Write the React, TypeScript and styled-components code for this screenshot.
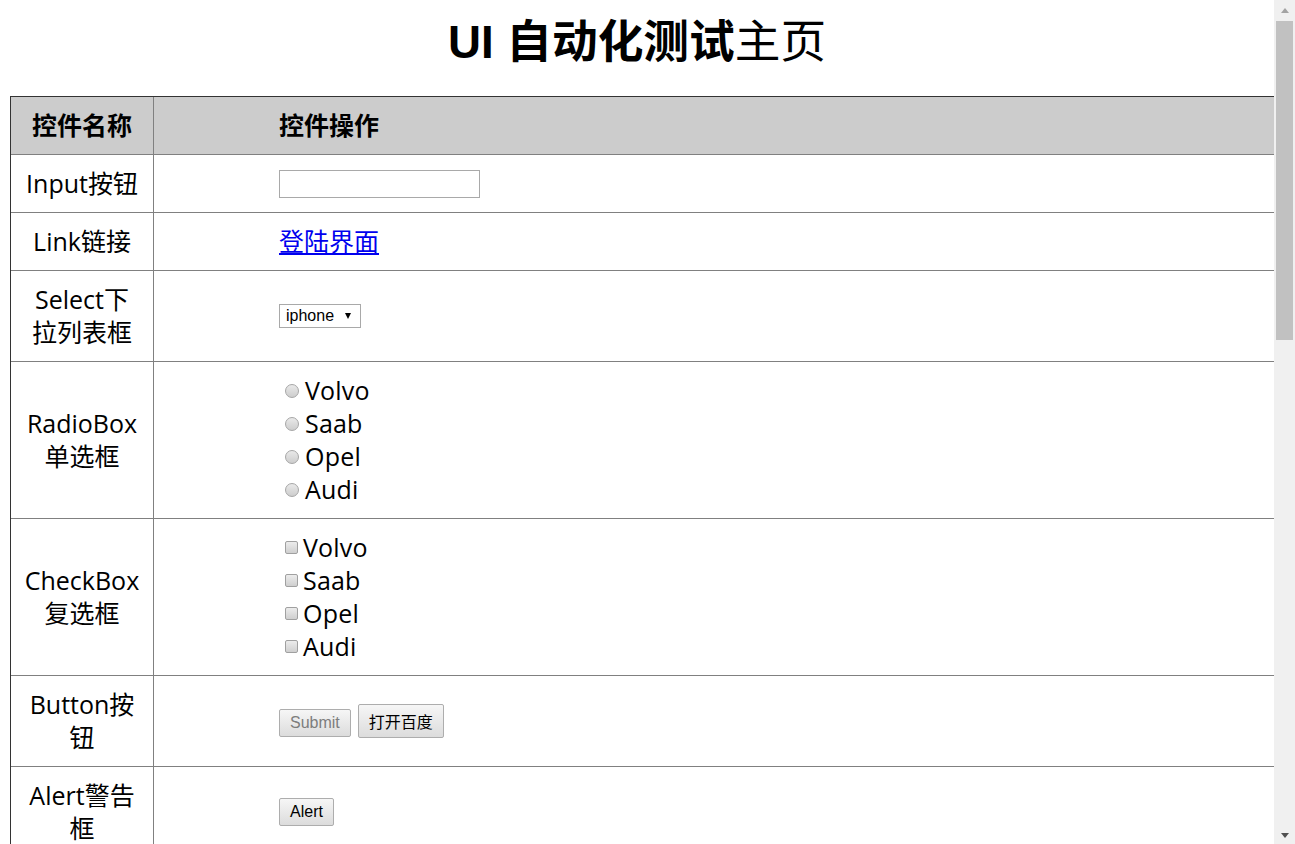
import React from 'react';
import styled, { createGlobalStyle } from 'styled-components';

const GlobalStyle = createGlobalStyle`
  html, body {
    margin: 0;
    padding: 0;
    height: 100%;
    overflow: hidden;
    background: #ffffff;
  }
  body {
    font-family: "Open Sans", "Noto Sans CJK SC", sans-serif;
    color: #000;
  }
`;

const Shell = styled.div`
  display: flex;
  height: 100vh;
  width: 100vw;
  overflow: hidden;
`;

const Page = styled.div`
  flex: 1;
  min-width: 0;
  overflow: hidden;
`;

const Title = styled.h1`
  margin: 17px 0 27px;
  text-align: center;
  font-family: "Liberation Sans", "Noto Sans CJK SC", sans-serif;
  font-size: 45.7px;
  line-height: 52px;
  font-weight: 400;
  white-space: nowrap;
`;

const Strong = styled.strong`
  font-weight: 700;
`;

const TableWrap = styled.div`
  padding-left: 10px;
`;

const Table = styled.table`
  width: 100%;
  box-sizing: border-box;
  table-layout: fixed;
  border-collapse: separate;
  border-spacing: 0;
  border-top: 1px solid #333333;
  border-left: 1px solid #333333;
  font-size: 25px;
  line-height: 33px;
`;

const NameCol = styled.col`
  width: 143px;
`;

const HeadCell = styled.th<{ $first?: boolean }>`
  box-sizing: border-box;
  background: #cccccc;
  font-weight: 700;
  padding: ${(p) => (p.$first ? '12px 4px' : '12px 0 12px 125px')};
  text-align: ${(p) => (p.$first ? 'center' : 'left')};
  border-bottom: 1px solid #808080;
  border-right: ${(p) => (p.$first ? '1px solid #808080' : 'none')};
  white-space: nowrap;
`;

const NameCell = styled.td`
  box-sizing: border-box;
  padding: 12px 4px;
  text-align: center;
  vertical-align: middle;
  border-bottom: 1px solid #808080;
  border-right: 1px solid #808080;
  white-space: nowrap;
`;

const ActionCell = styled.td`
  box-sizing: border-box;
  padding: 12px 0 12px 125px;
  text-align: left;
  vertical-align: middle;
  border-bottom: 1px solid #808080;
`;

const TextInput = styled.input`
  display: block;
  box-sizing: border-box;
  width: 201px;
  height: 28px;
  margin: 0;
  border: 1px solid #a9a9a9;
  background: #fff;
  padding: 0 4px;
`;

const Link = styled.a`
  color: #0000ee;
  text-decoration: underline;
`;

const SelectBox = styled.div`
  display: flex;
  width: max-content;
  align-items: center;
  gap: 11px;
  box-sizing: border-box;
  height: 24px;
  padding: 0 9px 0 6px;
  border: 1px solid #a9a9a9;
  background: #fff;
  font-family: "Liberation Sans", sans-serif;
  font-size: 16px;
  line-height: 18px;
`;

const Caret = styled.span`
  width: 0;
  height: 0;
  border-left: 3.5px solid transparent;
  border-right: 3.5px solid transparent;
  border-top: 6px solid #000;
`;

const Options = styled.div`
  display: flex;
  flex-direction: column;
`;

const Option = styled.label<{ $gap: number }>`
  display: flex;
  align-items: center;
  height: 33px;
  gap: ${(p) => p.$gap}px;
  letter-spacing: 0.2px;
`;

const Radio = styled.input`
  appearance: none;
  box-sizing: border-box;
  margin: 0 0 0 6px;
  width: 14px;
  height: 14px;
  border-radius: 50%;
  border: 1px solid #a6a6a6;
  background: linear-gradient(#e9e9e9, #cdcdcd);
  flex: none;
`;

const Check = styled.input`
  appearance: none;
  box-sizing: border-box;
  margin: 0 0 0 6px;
  width: 13px;
  height: 13px;
  border-radius: 2px;
  border: 1px solid #a0a0a0;
  background: linear-gradient(#ececec, #cfcfcf);
  flex: none;
`;

const ButtonRow = styled.div`
  display: flex;
  align-items: baseline;
  gap: 7px;
`;

const Button = styled.button<{ $muted?: boolean }>`
  font-family: "Liberation Sans", "Noto Sans CJK SC", sans-serif;
  font-size: 16px;
  line-height: normal;
  padding: 4px 10px;
  margin: 0;
  border: 1px solid #adadad;
  border-radius: 2px;
  background: linear-gradient(#f6f6f6, #dcdcdc);
  color: ${(p) => (p.$muted ? '#7d7d7d' : '#000')};
`;

/* Fake window scrollbar drawn at the right edge */
const ScrollBar = styled.div`
  flex: none;
  width: 21px;
  background: #f0f0f0;
  display: flex;
  flex-direction: column;
`;

const ScrollButton = styled.div<{ $down?: boolean }>`
  flex: none;
  height: 21px;
  display: flex;
  align-items: center;
  justify-content: center;
  padding-top: ${(p) => (p.$down ? '3px' : '0')};
  box-sizing: border-box;
`;

const Arrow = styled.span<{ $down?: boolean }>`
  width: 0;
  height: 0;
  border-left: 4.5px solid transparent;
  border-right: 4.5px solid transparent;
  ${(p) =>
    p.$down
      ? 'border-top: 5px solid #505050;'
      : 'border-bottom: 5px solid #a3a3a3;'}
`;

const Thumb = styled.div`
  flex: none;
  height: 319px;
  margin: 0 2px;
  background: #c1c1c1;
`;

const TrackRest = styled.div`
  flex: 1;
`;

type Kind = 'input' | 'link' | 'select' | 'radio' | 'checkbox' | 'buttons' | 'alert';

const rows: { name: string[]; kind: Kind }[] = [
  { name: ['Input按钮'], kind: 'input' },
  { name: ['Link链接'], kind: 'link' },
  { name: ['Select下', '拉列表框'], kind: 'select' },
  { name: ['RadioBox', '单选框'], kind: 'radio' },
  { name: ['CheckBox', '复选框'], kind: 'checkbox' },
  { name: ['Button按', '钮'], kind: 'buttons' },
  { name: ['Alert警告', '框'], kind: 'alert' },
];

const cars = ['Volvo', 'Saab', 'Opel', 'Audi'];

function Action({ kind }: { kind: Kind }) {
  switch (kind) {
    case 'input':
      return <TextInput type="text" />;
    case 'link':
      return <Link href="#">登陆界面</Link>;
    case 'select':
      return (
        <SelectBox>
          <span>iphone</span>
          <Caret />
        </SelectBox>
      );
    case 'radio':
      return (
        <Options>
          {cars.map((c) => (
            <Option key={c} $gap={6}>
              <Radio type="radio" name="car" value={c} />
              {c}
            </Option>
          ))}
        </Options>
      );
    case 'checkbox':
      return (
        <Options>
          {cars.map((c) => (
            <Option key={c} $gap={5}>
              <Check type="checkbox" value={c} />
              {c}
            </Option>
          ))}
        </Options>
      );
    case 'buttons':
      return (
        <ButtonRow>
          <Button $muted disabled>Submit</Button>
          <Button>打开百度</Button>
        </ButtonRow>
      );
    case 'alert':
      return (
        <ButtonRow>
          <Button>Alert</Button>
        </ButtonRow>
      );
  }
}

export default function App() {
  return (
    <>
      <GlobalStyle />
      <Shell>
        <Page>
          <Title>
            <Strong>UI 自动化测试</Strong>主页
          </Title>
          <TableWrap>
            <Table>
              <colgroup>
                <NameCol />
                <col />
              </colgroup>
              <thead>
                <tr>
                  <HeadCell $first>控件名称</HeadCell>
                  <HeadCell>控件操作</HeadCell>
                </tr>
              </thead>
              <tbody>
                {rows.map((r) => (
                  <tr key={r.kind}>
                    <NameCell>
                      {r.name.map((line, i) => (
                        <React.Fragment key={i}>
                          {i > 0 && <br />}
                          {line}
                        </React.Fragment>
                      ))}
                    </NameCell>
                    <ActionCell>
                      <Action kind={r.kind} />
                    </ActionCell>
                  </tr>
                ))}
              </tbody>
            </Table>
          </TableWrap>
        </Page>
        <ScrollBar>
          <ScrollButton>
            <Arrow />
          </ScrollButton>
          <Thumb />
          <TrackRest />
          <ScrollButton $down>
            <Arrow $down />
          </ScrollButton>
        </ScrollBar>
      </Shell>
    </>
  );
}
